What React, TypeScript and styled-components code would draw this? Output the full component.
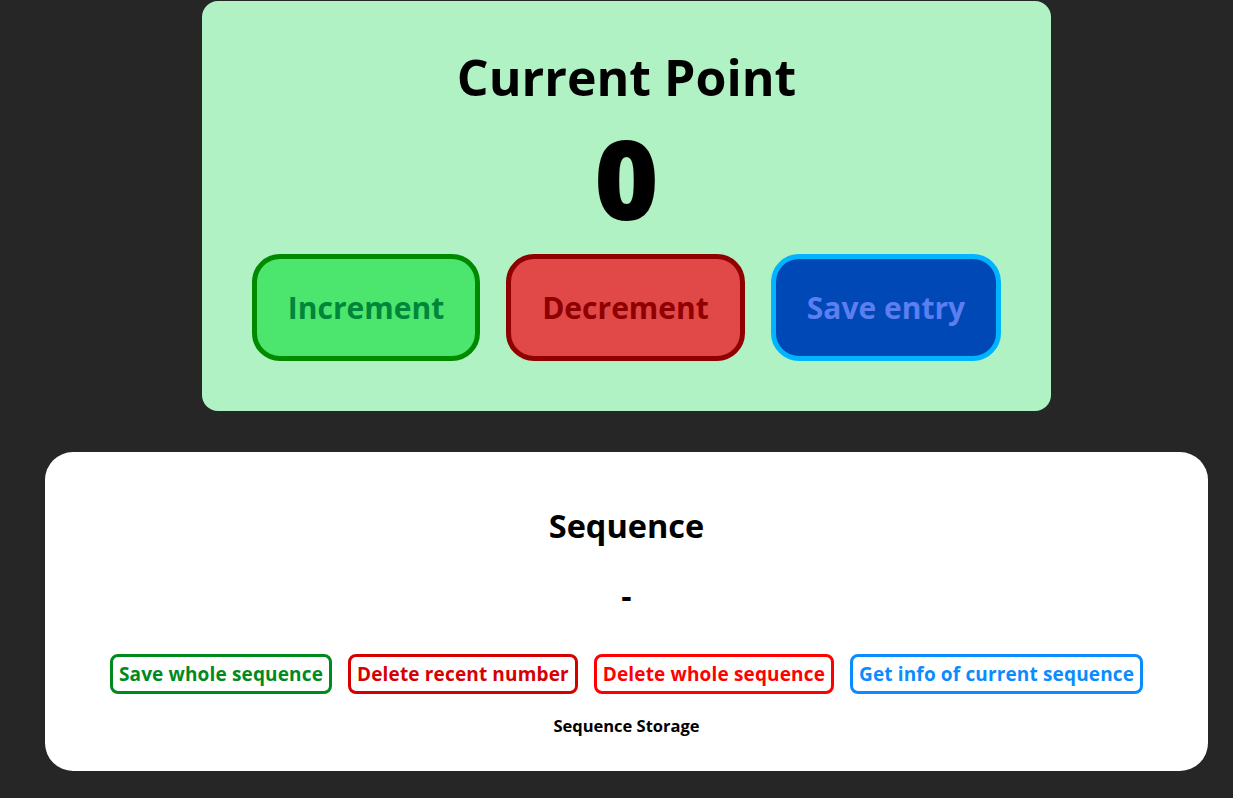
import React from "react";
import styled, { createGlobalStyle } from "styled-components";

const Global = createGlobalStyle`
  html, body { margin: 0; padding: 0; background: #262626; }
  body { font-family: "Open Sans", "Noto Sans", sans-serif; }
  * { box-sizing: border-box; }
`;

const Page = styled.div`
  width: 1233px;
  height: 798px;
  padding: 1px 25px 0 45px;
  display: flex;
  flex-direction: column;
  align-items: center;
  gap: 41px;
`;

const PointCard = styled.section`
  width: 849px;
  height: 410px;
  background: #b1f2c5;
  border-radius: 16px;
  display: flex;
  flex-direction: column;
  align-items: center;
  padding-top: 46px;
`;

const Title = styled.h1`
  margin: 0;
  font-size: 50px;
  line-height: 60px;
  font-weight: 700;
  color: #000;
`;

const PointValue = styled.div`
  margin-top: 10px;
  font-size: 110px;
  line-height: 120px;
  font-weight: 800;
  color: #000;
`;

const ButtonRow = styled.div`
  display: flex;
  gap: 26px;
  margin-top: 17px;
`;

const BigButton = styled.button<{ $bg: string; $border: string; $fg: string }>`
  font-family: inherit;
  font-size: 30px;
  font-weight: 700;
  line-height: 35px;
  padding: 31px 31px;
  border-radius: 28px;
  border: 5px solid ${(p) => p.$border};
  background: ${(p) => p.$bg};
  color: ${(p) => p.$fg};
  cursor: pointer;
`;

const SequenceCard = styled.section`
  align-self: stretch;
  height: 319px;
  background: #ffffff;
  border-radius: 28px;
  display: flex;
  flex-direction: column;
  align-items: center;
  padding-top: 54px;
`;

const SeqTitle = styled.h2`
  margin: 0;
  font-size: 32.5px;
  line-height: 40px;
  font-weight: 700;
  color: #000;
`;

const SeqValue = styled.div`
  margin-top: 30px;
  font-size: 32px;
  line-height: 40px;
  font-weight: 700;
  color: #000;
`;

const SmallRow = styled.div`
  display: flex;
  gap: 16px;
  margin-top: 38px;
`;

const SmallButton = styled.button<{ $color: string }>`
  font-family: inherit;
  font-size: 19px;
  font-weight: 700;
  line-height: 22px;
  letter-spacing: 0.15px;
  padding: 6px 6px;
  border-radius: 8px;
  border: 3px solid ${(p) => p.$color};
  background: #fff;
  color: ${(p) => p.$color};
  cursor: pointer;
`;

const Storage = styled.div`
  margin-top: 22px;
  font-size: 16.5px;
  line-height: 20px;
  font-weight: 700;
  color: #000;
`;

export default function App() {
  return (
    <>
      <Global />
      <Page>
        <PointCard>
          <Title>Current Point</Title>
          <PointValue>0</PointValue>
          <ButtonRow>
            <BigButton $bg="#4ce66f" $border="#008a00" $fg="#00863a">Increment</BigButton>
            <BigButton $bg="#e14848" $border="#910000" $fg="#8f0000">Decrement</BigButton>
            <BigButton $bg="#0048b5" $border="#00b4ff" $fg="#5b7ef0">Save entry</BigButton>
          </ButtonRow>
        </PointCard>
        <SequenceCard>
          <SeqTitle>Sequence</SeqTitle>
          <SeqValue>-</SeqValue>
          <SmallRow>
            <SmallButton $color="#008a1e">Save whole sequence</SmallButton>
            <SmallButton $color="#d60000">Delete recent number</SmallButton>
            <SmallButton $color="#ff0000">Delete whole sequence</SmallButton>
            <SmallButton $color="#0a8cff">Get info of current sequence</SmallButton>
          </SmallRow>
          <Storage>Sequence Storage</Storage>
        </SequenceCard>
      </Page>
    </>
  );
}
